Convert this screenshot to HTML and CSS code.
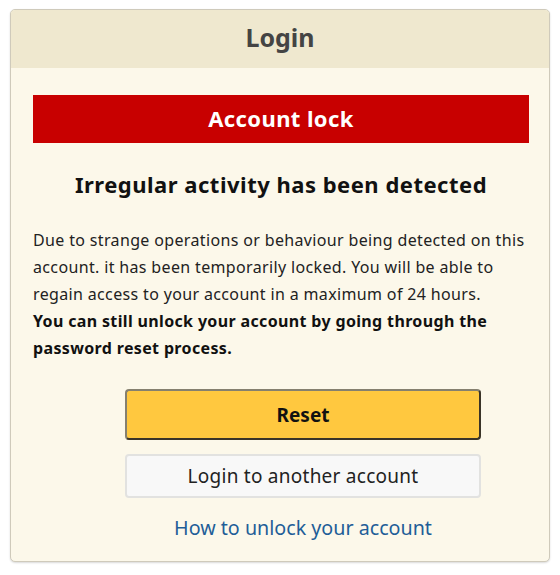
FILE: index.html
```html
<!DOCTYPE html>
<html lang="en">
<head>
  <meta charset="UTF-8">
  <meta name="viewport" content="width=device-width, initial-scale=1.0">
  <title>Login - Account lock</title>
  <link rel="stylesheet" href="styles.css">
</head>
<body>
  <div class="panel">
    <div class="panel-head">Login</div>
    <div class="panel-body">
      <div class="alert">Account lock</div>
      <h2 class="title">Irregular activity has been detected</h2>
      <p class="msg">
        Due to strange operations or behaviour being detected on this account. it has been temporarily locked. You will be able to regain access to your account in a maximum of 24 hours.<br>
        <b>You can still unlock your account by going through the password reset process.</b>
      </p>
      <div class="actions">
        <button type="button" class="btn btn-primary">Reset</button>
        <button type="button" class="btn btn-sub">Login to another account</button>
        <a href="#" class="help">How to unlock your account</a>
      </div>
    </div>
  </div>
</body>
</html>
```

FILE: styles.css
```css
body {
  font-family: "Noto Sans", "Open Sans", sans-serif;
  background: #fff;
  color: #222;
  margin: 0;
  padding: 9px 10px;
}
.panel {
  border: 1px solid #cfcabb;
  border-radius: 5px;
  background: #fcf8ea;
  box-shadow: 0 1px 2px rgba(0,0,0,0.15);
  overflow: hidden;
}
.panel-head {
  background: #efe8cf;
  height: 58px;
  line-height: 54px;
  text-align: center;
  font-size: 25px;
  font-weight: bold;
  color: #444;
}
.panel-body {
  padding: 27px 20px 20px 22px;
}
.alert {
  background: #c80000;
  color: #fff;
  height: 48px;
  line-height: 47px;
  text-align: center;
  font-size: 22px;
  letter-spacing: 0.4px;
  font-weight: bold;
}
.title {
  margin: 26px 0 0;
  text-align: center;
  font-size: 22px;
  letter-spacing: 0.5px;
  font-weight: bold;
  color: #111;
}
.msg {
  margin: 28px 0 0;
  font-size: 16px;
  letter-spacing: 0.35px;
  line-height: 27px;
  color: #222;
}
.msg b {
  color: #111;
}
.actions {
  display: flex;
  flex-direction: column;
  align-items: center;
  gap: 14px;
  margin: 27px 48px 0 92px;
}
.btn {
  width: 100%;
  font-family: inherit;
  border-radius: 4px;
  cursor: pointer;
}
.btn-primary {
  height: 51px;
  background: #ffc83f;
  font-size: 19px;
  font-weight: bold;
  color: #111;
  border: 2px solid #3a3428;
  border-top-color: #85806f;
  border-left-color: #85806f;
}
.btn-sub {
  height: 44px;
  background: #f8f8f8;
  font-size: 19px;
  letter-spacing: 0.25px;
  color: #222;
  border: 2px solid #e2e2e0;
}
.help {
  margin-top: 2px;
  font-size: 19.7px;
  color: #1f5e98;
  text-decoration: none;
}
```
